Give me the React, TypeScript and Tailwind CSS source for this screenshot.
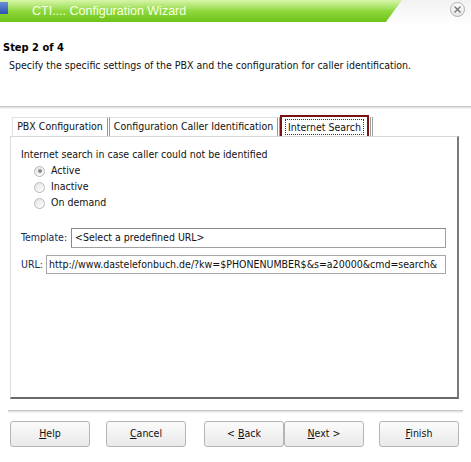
import React, { useState } from 'react';

const font = "font-['Tahoma','DejaVu_Sans_Condensed','Liberation_Sans',sans-serif]";

const Radio: React.FC<{ checked: boolean; label: string; onClick: () => void }> = ({ checked, label, onClick }) => (
  <button onClick={onClick} className="flex items-center gap-[6px] h-[16px] text-left">
    <span className="w-[11px] h-[11px] rounded-full border border-[#b8b8b8] bg-gradient-to-br from-[#e4e4e4] to-white flex items-center justify-center">
      {checked && <span className="w-[4px] h-[4px] rounded-full bg-[#8a8a8a]" />}
    </span>
    <span className="text-[10.5px] text-[#111]">{label}</span>
  </button>
);

const WizButton: React.FC<{ children: React.ReactNode; className?: string }> = ({ children, className = '' }) => (
  <button
    className={`h-[26px] w-[80px] rounded-[3px] border border-[#b5b5b5] bg-gradient-to-b from-[#fbfbfb] to-[#e9e9e9] text-[10.5px] text-[#111] flex items-center justify-center ${className}`}
  >
    {children}
  </button>
);

const App: React.FC = () => {
  const [mode, setMode] = useState<'active' | 'inactive' | 'demand'>('active');

  return (
    <div className={`w-[471px] h-[462px] bg-white flex flex-col overflow-hidden ${font}`}>
      {/* Title bar */}
      <div className="h-[25px] flex bg-gradient-to-b from-[#f2f2f2] to-white">
        <div className="w-[402px] h-[22px] bg-gradient-to-b from-[#d8f5a8] via-[#8fd93a] to-[#6cc21a] [clip-path:polygon(0_0,100%_0,96%_100%,0_100%)] flex items-center">
          <div className="w-[8px] h-[12px] bg-gradient-to-b from-[#6a8fd8] to-[#2c55b0] mb-[6px]" />
          <span className="ml-[24px] text-[12.5px] text-[#f8ffe8] font-['Liberation_Sans',sans-serif]">CTI.... Configuration Wizard</span>
        </div>
        <div className="flex-1 flex items-start justify-end pr-[6px] pt-[2px]">
          <div className="w-[15px] h-[15px] rounded-full border border-[#b0b0b0] bg-gradient-to-b from-white to-[#e4e4e4] flex items-center justify-center">
            <svg width="7" height="7" viewBox="0 0 7 7">
              <path d="M0.5 0.5 L6.5 6.5 M6.5 0.5 L0.5 6.5" stroke="#707070" strokeWidth="1.2" />
            </svg>
          </div>
        </div>
      </div>

      {/* Header */}
      <div className="h-[81px] px-[3px] pt-[15px]">
        <div className="text-[11px] font-bold text-black leading-[16px]">Step 2 of 4</div>
        <div className="text-[10.5px] text-[#111] leading-[16px] pl-[6px] mt-[1px] whitespace-nowrap">
          Specify the specific settings of the PBX and the configuration for caller identification.
        </div>
      </div>
      <div className="h-[3px] border-t border-[#c8c8c8] border-b border-b-[#f4f4f4] bg-[#e2e2e2]" />

      {/* Tabs */}
      <div className="px-[10px] pt-[6px]">
        <div className="flex items-end h-[21px] pl-[2px]">
          <div className="w-[98px] h-[19px] flex items-center justify-center border-t border-l border-[#e0e0e0] border-r-[3px] border-r-[#9a9a9a] [border-right-style:double] text-[10.5px] text-[#111]">
            PBX Configuration
          </div>
          <div className="w-[170px] h-[19px] flex items-center justify-center border-t border-[#e0e0e0] border-r-[3px] border-r-[#9a9a9a] [border-right-style:double] text-[10.5px] text-[#111] whitespace-nowrap">
            Configuration Caller Identification
          </div>
          <div className="w-[89px] h-[21px] border-2 border-b-0 border-[#7a1414] bg-white px-[2px] pt-[2px] flex items-start justify-center">
            <span className="border border-dotted border-[#333] px-[2px] leading-[14px] text-[10.5px] text-[#111] whitespace-nowrap">Internet Search</span>
          </div>
          <div className="h-[19px] w-[4px] border-r-[3px] border-r-[#a0a0a0] [border-right-style:double]" />
        </div>

        {/* Panel */}
        <div className="h-[263px] w-[449px] border-t border-l border-t-[#d6d6d6] border-l-[#dcdcdc] border-r-2 border-r-[#7a7a7a] border-b-2 border-b-[#6a6a6a] px-[10px] pt-[10px]">
          <div className="text-[10.5px] text-[#111] leading-[15px]">Internet search in case caller could not be identified</div>
          <div className="flex flex-col pl-[13px] mt-[1px]">
            <Radio checked={mode === 'active'} label="Active" onClick={() => setMode('active')} />
            <Radio checked={mode === 'inactive'} label="Inactive" onClick={() => setMode('inactive')} />
            <Radio checked={mode === 'demand'} label="On demand" onClick={() => setMode('demand')} />
          </div>

          <div className="flex items-center mt-[17px] h-[20px]">
            <span className="text-[10.5px] text-[#1a2a50] w-[50px]">Template:</span>
            <div className="flex-1 h-[20px] mr-[1px] border border-[#a0a0a0] border-t-[#8a8a8a] border-l-[#8a8a8a] bg-white flex items-center px-[3px] text-[10.5px] text-[#111] whitespace-nowrap">
              &lt;Select a predefined URL&gt;
            </div>
          </div>
          <div className="flex items-center mt-[7px] h-[19px]">
            <span className="text-[10.5px] text-[#1a2a50] w-[25px]">URL:</span>
            <div className="flex-1 h-[19px] mr-[1px] border border-[#a8a8a8] bg-white flex items-center px-[2px] text-[10.5px] text-[#111] whitespace-nowrap overflow-hidden">
              http://www.dastelefonbuch.de/?kw=$PHONENUMBER$&amp;s=a20000&amp;cmd=search&amp;
            </div>
          </div>
        </div>
      </div>

      {/* Bottom separator */}
      <div className="mt-[11px] mx-[8px] h-[3px] border-t border-[#c6c6c6] border-b border-b-[#f0f0f0] bg-[#e6e6e6]" />

      {/* Buttons */}
      <div className="flex items-center px-[10px] mt-[8px]">
        <WizButton><span><u>H</u>elp</span></WizButton>
        <WizButton className="ml-[16px]"><span><u>C</u>ancel</span></WizButton>
        <WizButton className="ml-[18px]"><span>&lt; <u>B</u>ack</span></WizButton>
        <WizButton><span><u>N</u>ext &gt;</span></WizButton>
        <WizButton className="ml-[15px]"><span><u>F</u>inish</span></WizButton>
      </div>
    </div>
  );
};

export default App;
